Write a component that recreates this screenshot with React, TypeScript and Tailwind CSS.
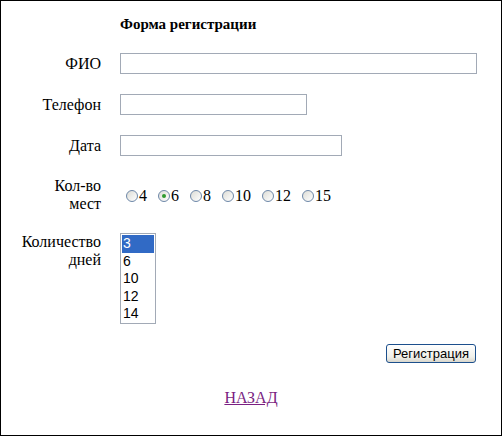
import React from "react";

const serif = "font-['Liberation_Serif','Times_New_Roman',serif]";
const sans = "font-['Liberation_Sans',Arial,sans-serif]";

function Radio({ label, checked }: { label: string; checked?: boolean }) {
  return (
    <span className="flex items-center">
      <span className="w-[12px] h-[12px] rounded-full border border-[#6d87a8] bg-[linear-gradient(135deg,#dcdcd6,#ffffff)] flex items-center justify-center box-border">
        {checked && <span className="w-[4px] h-[4px] rounded-full bg-[#2f9a2f]" />}
      </span>
      <span className="ml-[1px]">{label}</span>
    </span>
  );
}

export default function App() {
  const rowLabel = "text-right text-[16px] leading-[18px] text-black";
  return (
    <div className={`w-[502px] h-[436px] border border-black box-border bg-white ${serif} text-[16px] leading-[18px] text-black`}>
      <div className="pt-[14px] grid grid-cols-[100px_1fr] gap-x-[19px]">
        <div />
        <div className="font-bold text-[15px]">Форма регистрации</div>

        <div className={`${rowLabel} mt-[20px] self-center`}>ФИО</div>
        <div className="mt-[20px]">
          <div className="w-[357px] h-[21px] border border-[#a2aab6] box-border" />
        </div>

        <div className={`${rowLabel} mt-[20px] self-center`}>Телефон</div>
        <div className="mt-[20px]">
          <div className="w-[187px] h-[21px] border border-[#a2aab6] box-border" />
        </div>

        <div className={`${rowLabel} mt-[20px] self-center`}>Дата</div>
        <div className="mt-[20px]">
          <div className="w-[222px] h-[21px] border border-[#a2aab6] box-border" />
        </div>

        <div className={`${rowLabel} mt-[21px]`}>
          Кол-во
          <br />
          мест
        </div>
        <div className="mt-[21px] flex items-center gap-[11px] pl-[6px] pt-[1px]">
          <Radio label="4" />
          <Radio label="6" checked />
          <Radio label="8" />
          <Radio label="10" />
          <Radio label="12" />
          <Radio label="15" />
        </div>

        <div className={`${rowLabel} mt-[20px]`}>
          Количество
          <br />
          дней
        </div>
        <div className="mt-[20px]">
          <div className={`w-[36px] h-[91px] border border-[#a2aab6] box-border p-[1px] ${sans} text-[14px] leading-[17.6px]`}>
            <div className="bg-[#316ac5] text-white pl-[1px]">3</div>
            <div className="pl-[1px]">6</div>
            <div className="pl-[1px]">10</div>
            <div className="pl-[1px]">12</div>
            <div className="pl-[1px]">14</div>
          </div>
        </div>

        <div />
        <div className="mt-[20px] flex justify-end pr-[25px]">
          <button
            className={`w-[90px] h-[19px] rounded-[3px] border border-[#1c4f8c] bg-[linear-gradient(#ffffff,#f0f0ea_70%,#d8d6cc)] ${sans} text-[13px] leading-[15px] text-black p-0`}
          >
            Регистрация
          </button>
        </div>
      </div>
      <div className="mt-[26px] text-center">
        <a href="#" className="text-[#7b1f82] underline">
          НАЗАД
        </a>
      </div>
    </div>
  );
}
